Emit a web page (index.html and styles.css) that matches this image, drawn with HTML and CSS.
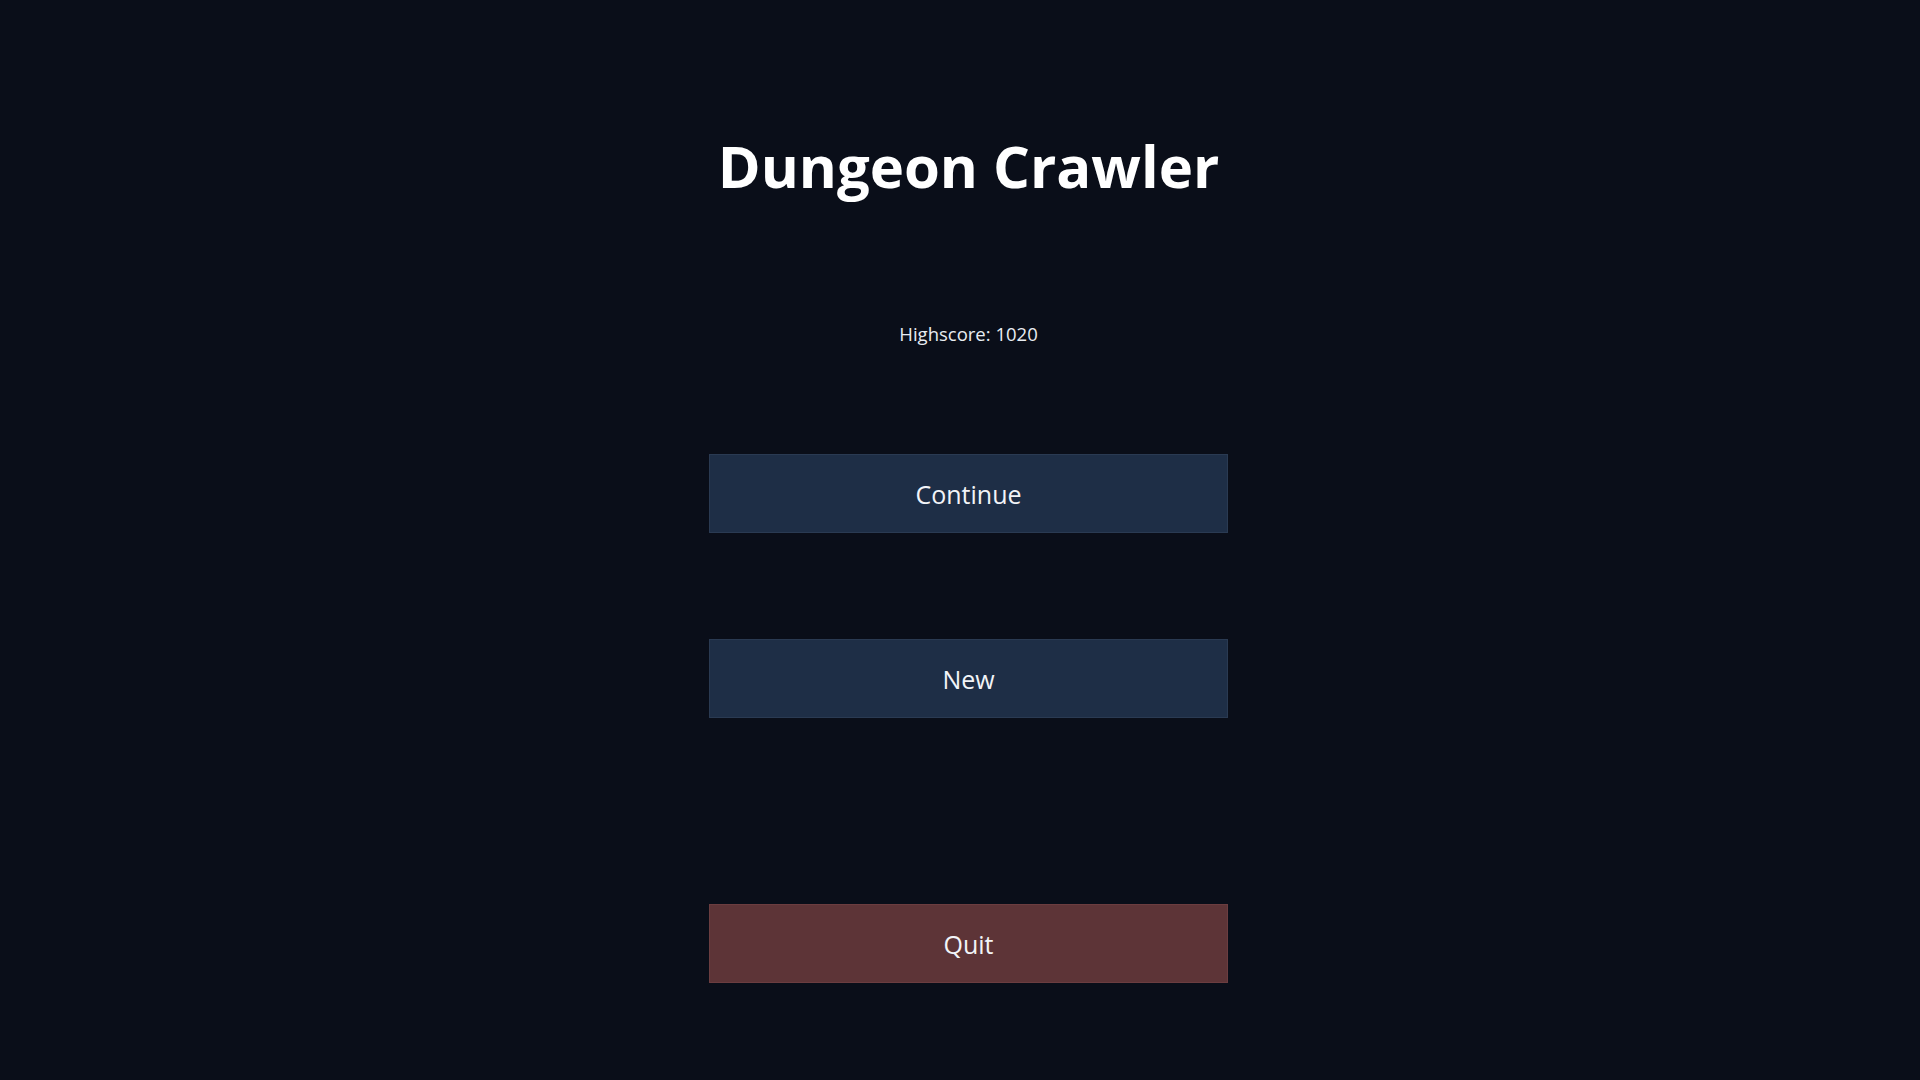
FILE: index.html
```html
<!DOCTYPE html>
<html lang="en">
<head>
<meta charset="utf-8">
<title>Dungeon Crawler</title>
<link rel="stylesheet" href="styles.css">
</head>
<body>
<main class="menu">
  <h1 class="title">Dungeon Crawler</h1>
  <p class="highscore">Highscore: 1020</p>
  <button class="btn btn-continue">Continue</button>
  <button class="btn btn-new">New</button>
  <button class="btn btn-quit">Quit</button>
</main>
</body>
</html>
```

FILE: styles.css
```css
html, body {
  margin: 0;
  padding: 0;
  height: 100%;
  background: #0a0e19;
}
body {
  font-family: "Open Sans", "Noto Sans", sans-serif;
  color: #ffffff;
}
.menu {
  display: flex;
  flex-direction: column;
  align-items: center;
  padding-top: 137px;
  padding-left: 17px;
}
.title {
  margin: 0;
  font-size: 58px;
  line-height: 1;
  font-weight: 700;
  color: #ffffff;
}
.highscore {
  margin: 130px 0 0 0;
  font-size: 18.5px;
  line-height: 1;
  color: #e8ecf2;
}
.btn {
  box-sizing: border-box;
  width: 519px;
  height: 79px;
  border: 1px solid #2a3a52;
  background: #1e2e46;
  color: #f2f4f8;
  font-family: "Open Sans", "Noto Sans", sans-serif;
  font-size: 25px;
  padding: 2px 0 0 0;
  display: flex;
  align-items: center;
  justify-content: center;
}
.btn-continue { margin-top: 110px; }
.btn-new { margin-top: 106px; }
.btn-quit {
  margin-top: 186px;
  background: #5d3437;
  border-color: #6b3d40;
}
```
